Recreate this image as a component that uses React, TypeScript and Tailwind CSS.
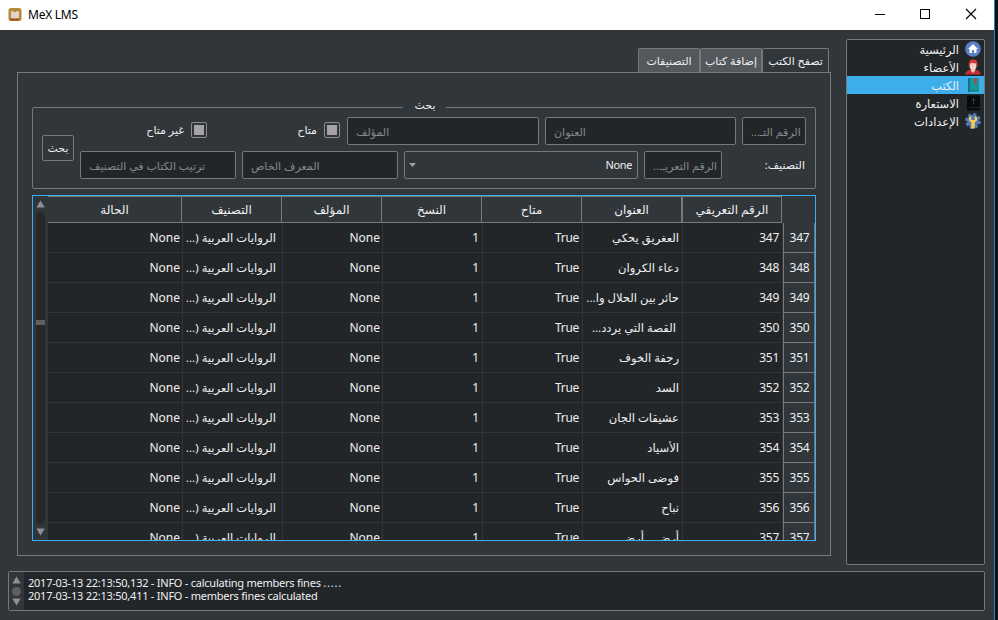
import type { ReactNode } from "react";

const ui = "font-['Noto_Sans','DejaVu_Sans',sans-serif]";

const columns = ["الحالة", "التصنيف", "المؤلف", "النسخ", "متاح", "العنوان", "الرقم التعريفي"];

const books = [
  { id: 347, title: "العغريق يحكي" },
  { id: 348, title: "دعاء الكروان" },
  { id: 349, title: "حائر بين الحلال وا", cut: true },
  { id: 350, title: "\u00a0القصة التي يردد", cut: true },
  { id: 351, title: "رجفة الخوف" },
  { id: 352, title: "السد" },
  { id: 353, title: "عشيقات الجان" },
  { id: 354, title: "الأسياد" },
  { id: 355, title: "فوضى الحواس" },
  { id: 356, title: "نباح" },
  { id: 357, title: "أرض .. أرض" },
];

const headGrid = "grid grid-cols-[134px_100px_100px_100px_100px_100px_100px_33px]";
const bodyGrid = "grid grid-cols-[135px_100px_100px_100px_100px_100px_100px_32px]";

function Field({ children, className }: { children: ReactNode; className: string }) {
  return (
    <div
      className={`flex h-7 shrink-0 items-center overflow-hidden whitespace-nowrap rounded-[2px] border border-[#76797c] bg-[#232629] pt-0.5 text-[11px] text-[#85888a] ${className}`}
    >
      <span dir="rtl">{children}</span>
    </div>
  );
}

function Check({ children }: { children: ReactNode }) {
  return (
    <div className="flex items-center gap-[7px] text-[11px] text-[#eff0f1]">
      <span dir="rtl" className="whitespace-nowrap">{children}</span>
      <span className="flex size-4 items-center justify-center rounded-[2px] border border-[#8a8d8f]">
        <span className="size-[10px] bg-[#a5a3a3]" />
      </span>
    </div>
  );
}

function Arrow({ down = false }: { down?: boolean }) {
  return (
    <svg width="9" height="8" viewBox="0 0 9 8" className="shrink-0">
      <path d={down ? "M0.3 0.5H8.7L4.5 7.5Z" : "M4.5 0.5L8.7 7.5H0.3Z"} fill="#8f9092" />
    </svg>
  );
}

function Titlebar() {
  return (
    <div className="flex h-[30px] shrink-0 items-center bg-white text-black">
      <svg className="ml-2" width="14" height="14" viewBox="0 0 14 14">
        <rect x="0.5" y="0" width="13" height="13" rx="2.5" fill="#b98a35" />
        <rect x="2" y="10.5" width="9" height="2" fill="#a04a20" />
        <path d="M3 3.5L5 3L7 4.5L9 3L11 3.5V10L7 10.5L3 10Z" fill="#ddd5cc" />
      </svg>
      <span className="ml-[6px] text-[12px] tracking-[-0.25px]">MeX LMS</span>
      <svg className="mb-[2px] ml-auto mr-[16px]" width="104" height="12" viewBox="0 0 104 12" fill="none" stroke="#000">
        <path d="M1 6.5H11" />
        <rect x="46.5" y="1.5" width="9" height="9" />
        <path d="M92 1L102 11M102 1L92 11" strokeWidth="1.1" />
      </svg>
    </div>
  );
}

function SearchBox() {
  return (
    <fieldset className="mx-[14px] h-[90px] rounded-[2px] border border-[#76797c] text-[11px]">
      <legend className="mx-auto h-[16px] w-[43px] pl-0.5 text-center leading-[11px] text-[#eff0f1]">
        <span dir="rtl">بحث</span>
      </legend>
      <div className="mt-[2px] flex items-center pl-[9px] pr-[9px]">
        <button className="h-[26px] w-8 rounded-[2px] border border-[#76797c] text-[#eff0f1]">بحث</button>
        <div className="ml-[6px] w-[726px]">
          <div className="flex h-7 items-center">
            <div className="flex w-[127px] justify-end pb-0.5"><Check>غير متاح</Check></div>
            <div className="mr-[7px] flex w-[133px] justify-end pb-0.5"><Check>متاح</Check></div>
            <Field className="w-48 pl-2">المؤلف</Field>
            <Field className="ml-[6px] w-[191px] pl-2">العنوان</Field>
            <Field className="ml-[6px] w-16 pl-2">الرقم التـ<Dots /></Field>
          </div>
          <div className="mt-[6px] flex h-7 items-center gap-[6px]">
            <Field className="w-[156px] pl-2">ترتيب الكتاب في التصنيف</Field>
            <Field className="w-[156px] pl-2">المعرف الخاص</Field>
            <div className="flex h-7 w-[234px] shrink-0 items-center justify-between rounded-[2px] border border-[#76797c] px-[5px] text-[#eff0f1]">
              <svg width="7" height="4" viewBox="0 0 7 4" className="-ml-px"><path d="M0 0H7L3.5 4Z" fill="#a0a2a3" /></svg>
              <span className="tracking-[-0.4px]">None</span>
            </div>
            <Field className="w-[78px] pl-2">الرقم التعريـ<Dots /></Field>
            <span dir="rtl" className="w-[77px] whitespace-nowrap text-[#eff0f1]">التصنيف:</span>
          </div>
        </div>
      </div>
    </fieldset>
  );
}

function Cell({ children, className = "" }: { children: ReactNode; className?: string }) {
  return (
    <div dir="rtl" className={`flex items-center overflow-hidden whitespace-nowrap border-b border-r border-[#31363b] bg-[#232629] ${className}`}>
      {children}
    </div>
  );
}

function Dots() {
  return <span className="tracking-[-0.5px]">...</span>;
}

function Table() {
  return (
    <div className="mx-[14px] mt-[6px] flex h-[346px] border border-[#3daee9] text-[12px] text-[#eff0f1]">
      <div className="flex w-[15px] shrink-0 flex-col items-center pt-1 pb-1 pr-px">
        <Arrow />
        <div className="my-1 flex w-[9px] flex-1 flex-col rounded-[4px] bg-[#2a2729]">
          <div className="mt-[108px] h-[5px] bg-[#605f5f]" />
        </div>
        <Arrow down />
      </div>
      <div className="min-w-0 flex-1 overflow-hidden">
        <div className={headGrid}>
          {columns.map((c) => (
            <div key={c} dir="rtl" className="flex h-[27px] items-center justify-center border-y border-r border-[#76797c] last:border-l">{c}</div>
          ))}
        </div>
        {books.map((b) => (
          <div key={b.id} className={`${bodyGrid} h-[30px]`}>
            <Cell className="pr-[2px]">None</Cell>
            <Cell className="pr-[6px] text-[11.6px]"><span>الروايات العربية (<Dots /></span></Cell>
            <Cell className="pr-[2px]">None</Cell>
            <Cell className="pr-[3px]">1</Cell>
            <Cell className="pr-[3px] tracking-[-0.3px]">True</Cell>
            <Cell className="pr-[3px] text-[11.6px]"><span>{b.title}{b.cut && <Dots />}</span></Cell>
            <Cell className="pr-[3px] tracking-[-0.3px]">{b.id}</Cell>
            <div className="flex items-center justify-center border-x border-b border-[#76797c] pl-px tracking-[-0.2px]">{b.id}</div>
          </div>
        ))}
      </div>
    </div>
  );
}

function Sidebar() {
  const items: [string, ReactNode][] = [
    ["الرئيسية", <g key="h"><circle cx="8" cy="8" r="7.8" fill="#5b7fc7" /><path d="M8 3L3 8H4.5V12H7V9H9V12H11.5V8H13Z" fill="#fff" /></g>],
    ["الأعضاء", <g key="m"><path d="M0.3 15.5Q0.5 11.5 5.5 10.5H10.5Q15.5 11.5 15.7 15.5Z" fill="#c72f32" /><path d="M6 9H10V12L8 14L6 12Z" fill="#f0c5b4" /><ellipse cx="8" cy="6.5" rx="3.5" ry="4.5" fill="#f3d0c2" /><path d="M4 8Q2.5 0.5 8.5 0.3Q13.5 1 12.5 8L11 4.5L6 4Z" fill="#d43b36" /></g>],
    ["الكتب", <g key="b"><rect x="3" y="1" width="11" height="14" rx="1" fill="#14989a" /><rect x="3" y="1" width="2" height="14" fill="#176f79" /><path d="M9 1H12V8L10.5 6.5L9 8Z" fill="#98515d" /><path d="M5 13.5H14" stroke="#2b7c86" /></g>],
    ["الاستعارة", <g key="l"><rect x="2" y="0.5" width="13" height="15" rx="1" fill="#08090a" /><path d="M8.5 9.5V3.5M6.5 5.5L8.5 3.5L10.5 5.5" stroke="#35393c" fill="none" /><path d="M4 12.5H15" stroke="#25292c" /></g>],
    ["الإعدادات", <g key="s"><circle cx="8" cy="8" r="6" fill="#5179bd" /><circle cx="8" cy="8" r="6.6" stroke="#5179bd" strokeWidth="2.6" strokeDasharray="3.2 1.98" fill="none" /><path d="M4 4V7.5L6.3 9.5V15.5H9.7V9.5L12 7.5V4L9.8 3V7H6.2V3Z" fill="#f3cf4c" /></g>],
  ];
  return (
    <div className="h-[526px] w-[139px] shrink-0 rounded-[2px] border border-[#76797c] bg-[#232629] text-[11.5px] text-[#eff0f1]">
      {items.map(([label, icon], i) => (
        <div key={label} className={`flex h-[18px] items-center justify-end gap-[6px] pr-[3px] ${i === 2 ? "bg-[#3daee9]" : ""}`}>
          <span dir="rtl" className="whitespace-nowrap pt-[2px]">{label}</span>
          <svg width="16" height="16" viewBox="0 0 16 16">{icon}</svg>
        </div>
      ))}
    </div>
  );
}

export default function App() {
  return (
    <div className={`flex h-[620px] w-[998px] overflow-hidden bg-[#101112] ${ui}`}>
      <div className="flex w-[995px] flex-col border-r border-[#1883d7] bg-[#31363b]">
        <Titlebar />
        <div className="flex items-start pl-[17px] pt-[9px]">
          <div className="w-[814px] pt-[9px]">
            <div className="flex h-[24px] justify-end pr-[2px] text-[11px] text-[#eff0f1]">
              {["التصنيفات", "إضافة كتاب"].map((t) => (
                <div key={t} dir="rtl" className="flex w-[62px] items-center justify-center whitespace-nowrap rounded-t-[2px] border border-b-0 border-[#76797c] bg-[#54575b] pt-0.5">{t}</div>
              ))}
              <div dir="rtl" className="flex h-6 w-[67px] items-center justify-center whitespace-nowrap rounded-t-[2px] border border-b-0 border-[#76797c] bg-[#31363b] pt-0.5">تصفح الكتب</div>
            </div>
            <div className="h-[484px] border border-[#76797c] pt-[26px]">
              <SearchBox />
              <Table />
            </div>
          </div>
          <div className="ml-[15px]"><Sidebar /></div>
        </div>
        <div className="ml-2 mt-[6px] flex h-[40px] w-[977px] overflow-hidden rounded-[2px] border border-[#76797c] bg-[#232629]">
          <div className="flex w-[15px] flex-col items-center justify-between bg-[#31363b] py-1 pr-px">
            <Arrow />
            <div className="size-[9px] rounded-full bg-[#605f5f]" />
            <Arrow down />
          </div>
          <div className="pl-1 pt-1 text-[11px] leading-[13px] tracking-[-0.24px] text-[#eff0f1]">
            <div className="whitespace-nowrap">2017-03-13 22:13:50,132 - INFO - calculating members fines <span className="tracking-[0.8px]">.....</span></div>
            <div className="whitespace-nowrap">2017-03-13 22:13:50,411 - INFO - members fines calculated</div>
          </div>
        </div>
      </div>
    </div>
  );
}
